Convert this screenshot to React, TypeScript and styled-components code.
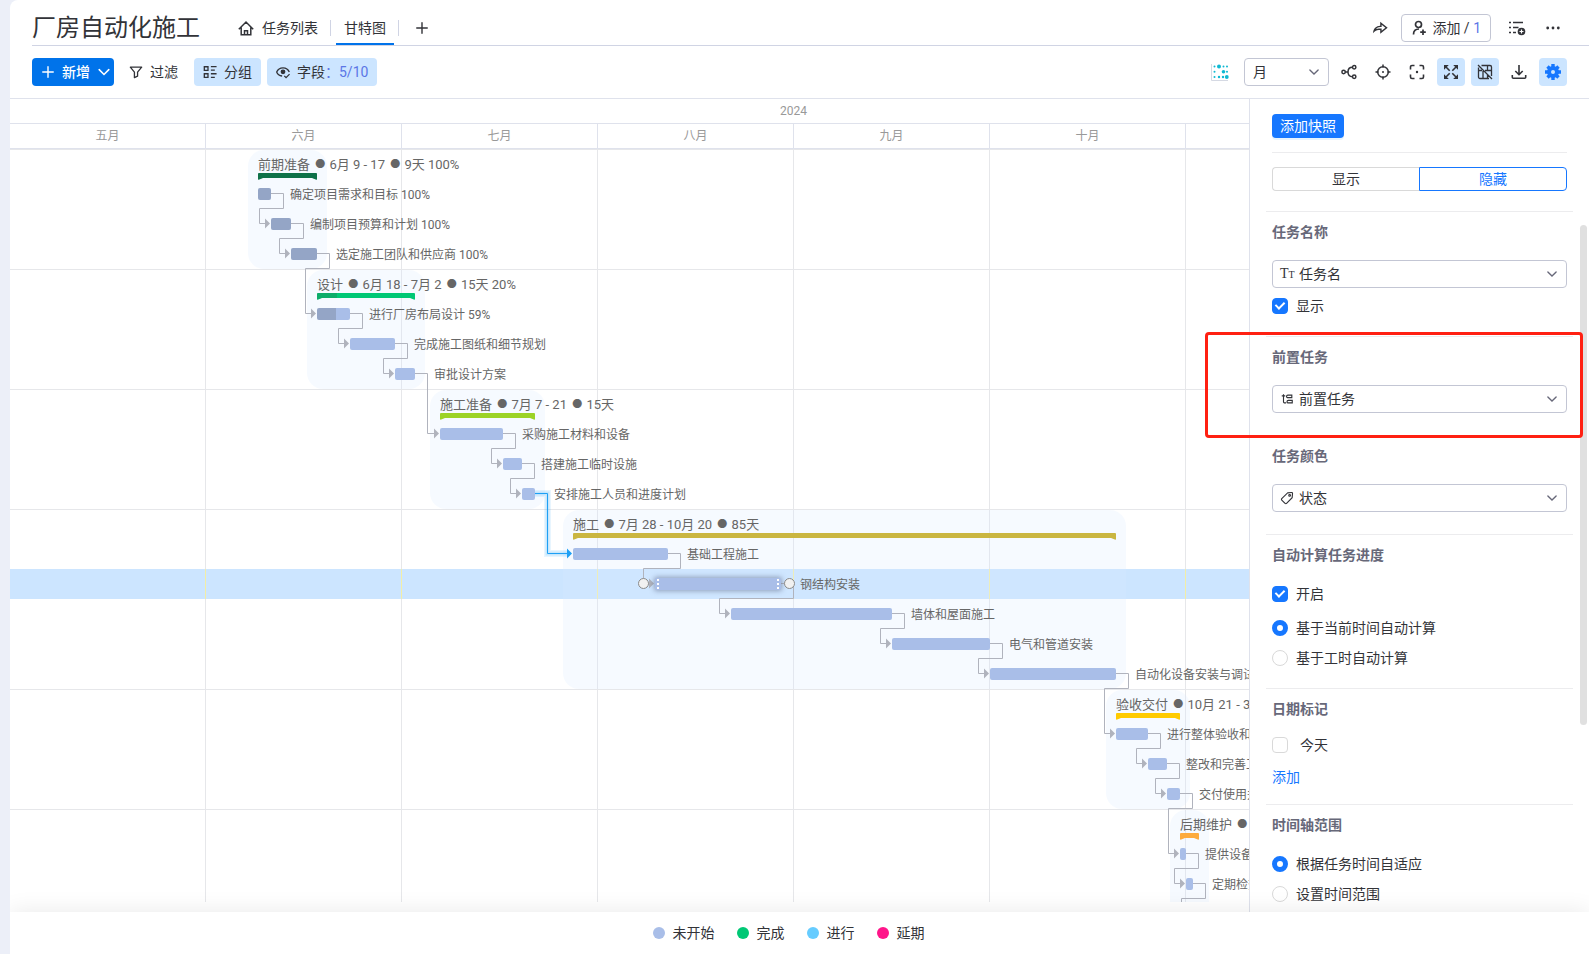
import React from "react";
import styled, { createGlobalStyle, css } from "styled-components";
import { RiShareForwardLine } from "react-icons/ri";

const GlobalStyle = createGlobalStyle`
  *, *::before, *::after { box-sizing: border-box; }
  body {
    margin: 0;
    background: #eceff8;
    color: #323338;
    font-family: Roboto, "Noto Sans CJK SC", sans-serif;
    font-size: 14px;
    line-height: 22px;
  }
  button, select, input { font: inherit; color: inherit; margin: 0; }
  svg { display: block; flex: none; }
`;

/* ---------- timeline data ---------- */

const MONTH_WIDTH = 196;
const ROW_HEIGHT = 30;
const FIRST_MONTH = 5;
const MONTH_NAMES = ["五月", "六月", "七月", "八月", "九月", "十月", "十一月", "十二月"];
const MONTH_DAYS = [31, 30, 31, 31, 30, 31, 30, 31];

type Day = [month: number, day: number];

/** Every month has the same width, so a day is narrower in a longer month. */
const dayToX = ([month, day]: Day) => {
  const index = month - FIRST_MONTH;
  return Math.round((index + (day - 1) / MONTH_DAYS[index]) * MONTH_WIDTH);
};

interface Task {
  name: string;
  from: Day;
  until: Day;
  progress?: number;
  selected?: boolean;
  activeLink?: boolean;
}

interface Group {
  title: string;
  color: string;
  progress?: number;
  tasks: Task[];
}

const GROUPS: Group[] = [
  {
    title: "前期准备 ● 6月 9 - 17 ● 9天 100%",
    color: "#037f4c",
    progress: 100,
    tasks: [
      { name: "确定项目需求和目标 100%", from: [6, 9], until: [6, 11], progress: 100 },
      { name: "编制项目预算和计划 100%", from: [6, 11], until: [6, 14], progress: 100 },
      { name: "选定施工团队和供应商 100%", from: [6, 14], until: [6, 18], progress: 100 },
    ],
  },
  {
    title: "设计 ● 6月 18 - 7月 2 ● 15天 20%",
    color: "#00c875",
    progress: 20,
    tasks: [
      { name: "进行厂房布局设计 59%", from: [6, 18], until: [6, 23], progress: 59 },
      { name: "完成施工图纸和细节规划", from: [6, 23], until: [6, 30] },
      { name: "审批设计方案", from: [6, 30], until: [7, 3] },
    ],
  },
  {
    title: "施工准备 ● 7月 7 - 21 ● 15天",
    color: "#9cd326",
    tasks: [
      { name: "采购施工材料和设备", from: [7, 7], until: [7, 17] },
      { name: "搭建施工临时设施", from: [7, 17], until: [7, 20] },
      { name: "安排施工人员和进度计划", from: [7, 20], until: [7, 22], activeLink: true },
    ],
  },
  {
    title: "施工 ● 7月 28 - 10月 20 ● 85天",
    color: "#cab641",
    tasks: [
      { name: "基础工程施工", from: [7, 28], until: [8, 12] },
      { name: "钢结构安装", from: [8, 10], until: [8, 30], selected: true },
      { name: "墙体和屋面施工", from: [8, 22], until: [9, 16] },
      { name: "电气和管道安装", from: [9, 16], until: [10, 1] },
      { name: "自动化设备安装与调试", from: [10, 1], until: [10, 21] },
    ],
  },
  {
    title: "验收交付 ● 10月 21 - 30 ● 10天",
    color: "#ffcb00",
    tasks: [
      { name: "进行整体验收和测试", from: [10, 21], until: [10, 26] },
      { name: "整改和完善工程", from: [10, 26], until: [10, 29] },
      { name: "交付使用并培训", from: [10, 29], until: [10, 31] },
    ],
  },
  {
    title: "后期维护 ● 10月 31 - 11月 2 ● 3天",
    color: "#fdab3d",
    tasks: [
      { name: "提供设备维护", from: [10, 31], until: [11, 1] },
      { name: "定期检查", from: [11, 1], until: [11, 2] },
      { name: "总结评估", from: [11, 2], until: [11, 3] },
    ],
  },
];

interface PlacedTask extends Task { row: number; x1: number; x2: number }
interface PlacedGroup extends Group { row: number; x1: number; x2: number; placed: PlacedTask[] }

const placeGroups = (): PlacedGroup[] => {
  let row = 0;
  return GROUPS.map((group) => {
    const first = row;
    const placed = group.tasks.map((task, i) => ({
      ...task,
      row: first + 1 + i,
      x1: dayToX(task.from),
      x2: dayToX(task.until),
    }));
    row += group.tasks.length + 1;
    return { ...group, row: first, x1: placed[0].x1, x2: placed[placed.length - 1].x2, placed };
  });
};

const PLACED = placeGroups();
const ALL_TASKS = PLACED.flatMap((g) => g.placed);

/* ---------- shell ---------- */

const Shell = styled.div`
  display: flex;
  flex-direction: column;
  height: 100vh;
  margin-left: 10px;
  background: #fff;
  border-top-left-radius: 8px;
  overflow: hidden;
`;

const Header = styled.header`
  display: flex;
  align-items: center;
  flex: none;
  height: 46px;
  margin-left: 22px;
  padding-right: 22px;
  border-bottom: 1px solid #d0d4e4;
`;

const Title = styled.h1`
  margin: 0 30px 0 0;
  padding-top: 10px;
  font-size: 24px;
  line-height: 32px;
  font-weight: 400;
  white-space: nowrap;
`;

const Tabs = styled.nav`
  display: flex;
  align-items: center;
  height: 45px;
  padding-top: 11px;
`;

const Tab = styled.a<{ $active?: boolean }>`
  display: flex;
  align-items: center;
  gap: 8px;
  height: 34px;
  padding: 2px 8px 0;
  border-bottom: 2px solid ${(p) => (p.$active ? "#0073ea" : "transparent")};
  color: inherit;
  text-decoration: none;
  white-space: nowrap;
`;

const TabRule = styled.span`
  width: 1px;
  height: 16px;
  margin: 0 5px 0 4px;
  background: #d0d4e4;
`;

const Spacer = styled.div`
  flex: 1;
`;

const IconButton = styled.button<{ $on?: boolean }>`
  display: flex;
  align-items: center;
  justify-content: center;
  flex: none;
  width: 28px;
  height: 28px;
  padding: 0;
  border: 0;
  border-radius: 4px;
  background: ${(p) => (p.$on ? "#cce5ff" : "transparent")};
  cursor: pointer;
`;

const AddTab = styled(IconButton)`
  margin-left: 4px;
`;

const HeaderActions = styled.div`
  display: flex;
  align-items: center;
  gap: 8px;
  padding-top: 11px;
`;

const InviteButton = styled.button`
  display: flex;
  align-items: center;
  gap: 5px;
  height: 28px;
  margin-right: 4px;
  padding: 0 9px;
  border: 1px solid #c3c6d4;
  border-radius: 4px;
  background: #fff;
  white-space: nowrap;
  cursor: pointer;
`;

const Count = styled.span`
  color: #5b76e6;
`;

const Toolbar = styled.div`
  display: flex;
  align-items: center;
  flex: none;
  gap: 6px;
  height: 53px;
  padding: 0 22px;
  border-bottom: 1px solid #dfe2ec;
`;

const ToolButton = styled.button<{ $kind?: "primary" | "on" }>`
  display: flex;
  align-items: center;
  gap: 7px;
  height: 28px;
  padding: 0 9px;
  border: 0;
  border-radius: 4px;
  background: transparent;
  white-space: nowrap;
  cursor: pointer;
  ${(p) => p.$kind === "on" && css`background: #cce5ff;`}
  ${(p) => p.$kind === "primary" && css`
    padding: 0 3px 0 9px;
    background: #0073ea;
    color: #fff;
    font-weight: 500;
  `}
`;

const FilterButton = styled(ToolButton)`
  margin-right: 1px;
`;

const BoardButton = styled(IconButton)`
  margin-right: 4px;
`;

const SelectFrame = styled.div<{ $width?: number }>`
  position: relative;
  width: ${(p) => (p.$width ? `${p.$width}px` : "100%")};
  height: 28px;
`;

const Select = styled.select<{ $icon?: boolean }>`
  width: 100%;
  height: 28px;
  padding: 0 28px 0 ${(p) => (p.$icon ? 26 : 8)}px;
  border: 1px solid #c3c6d4;
  border-radius: 4px;
  background: #fff;
  appearance: none;
  cursor: pointer;
`;

const SelectIcon = styled.span`
  position: absolute;
  left: 8px;
  top: 0;
  display: flex;
  align-items: center;
  height: 28px;
  pointer-events: none;
`;

const SelectArrow = styled.span`
  position: absolute;
  right: 9px;
  top: 0;
  display: flex;
  align-items: center;
  height: 28px;
  color: #676879;
  pointer-events: none;
`;

const TextMark = styled.span`
  font: 14px/28px "Liberation Serif", serif;
  color: #323338;
`;

const TextMarkSmall = styled.span`
  font-size: 10px;
`;

const Main = styled.main`
  display: flex;
  flex: 1;
  min-height: 0;
`;

/* ---------- gantt ---------- */

const Chart = styled.section`
  display: flex;
  flex-direction: column;
  flex: 1;
  min-width: 0;
  padding-bottom: 10px;
  overflow: hidden;
`;

const ScaleRow = styled.div`
  display: flex;
  flex: none;
  height: 25px;
  width: ${MONTH_WIDTH * MONTH_NAMES.length}px;
  border-bottom: 1px solid #dfe2ec;
`;

const ScaleCell = styled.div<{ $span?: number }>`
  flex: none;
  width: ${(p) => (p.$span ?? 1) * MONTH_WIDTH}px;
  border-right: 1px solid #dfe2ec;
  color: #999;
  font-size: 12px;
  line-height: 24px;
  text-align: center;
`;

const Canvas = styled.div`
  position: relative;
  flex: 1;
  min-height: 0;
  overflow: hidden;
`;

const GroupBlock = styled.div`
  border-top: 1px solid #e6e7ea;
`;

const SelectedRow = styled.div`
  position: absolute;
  left: 0;
  right: 0;
  height: ${ROW_HEIGHT}px;
  background: #cce5ff;
`;

const Band = styled.div`
  position: absolute;
  border-radius: 16px;
  background: rgba(217, 235, 255, 0.235);
`;

const GridLines = styled.div<{ $color: string }>`
  position: absolute;
  inset: 0;
  background: repeating-linear-gradient(
    to right,
    transparent 0 ${MONTH_WIDTH - 1}px,
    ${(p) => p.$color} ${MONTH_WIDTH - 1}px ${MONTH_WIDTH}px
  );
`;

const Links = styled.svg`
  position: absolute;
  left: 0;
  top: 0;
`;

const SummaryTitle = styled.div`
  position: absolute;
  color: #666;
  font-size: 13px;
  line-height: 32px;
  white-space: nowrap;
`;

const SummaryDot = styled.span`
  display: inline-block;
  width: 9px;
  margin: 0 2px;
  font-size: 10px;
  line-height: 1;
  vertical-align: 1px;
`;

const SummaryBar = styled.div<{ $color: string }>`
  position: absolute;
  height: 7px;
  background: ${(p) => p.$color};
  border-radius: 1px;
  clip-path: polygon(0 0, 100% 0, 100% 100%, calc(100% - 5px) 5px, 5px 5px, 0 100%);
`;

const Bar = styled.div<{ $selected?: boolean }>`
  position: absolute;
  height: 12px;
  border-radius: 2px;
  background: #a9bee8;
  overflow: hidden;
  ${(p) => p.$selected && css`
    box-shadow: 0 0 5px 1px rgba(80, 90, 120, 0.5);
    &::before, &::after {
      content: "";
      position: absolute;
      top: 1px;
      bottom: 1px;
      width: 2px;
      background: repeating-linear-gradient(to bottom, #fff 0 2px, transparent 2px 4px);
    }
    &::before { left: 2px; }
    &::after { right: 2px; }
  `}
`;

const Progress = styled.div`
  height: 100%;
  background: rgba(64, 64, 64, 0.2);
`;

const BarLabel = styled.div`
  position: absolute;
  color: #666;
  font-size: 12px;
  line-height: 32px;
  white-space: nowrap;
`;

const Knob = styled.span`
  position: absolute;
  width: 11px;
  height: 11px;
  border: 1px solid #8a8a8a;
  border-radius: 50%;
  background: #f1f1f1;
`;

const linkPath = (a: PlacedTask, b: PlacedTask) => {
  const y1 = a.row * ROW_HEIGHT + 14.5;
  const y2 = b.row * ROW_HEIGHT + 14.5;
  const out = a.x2 + 12.5;
  const into = b.x1 - 11.5;
  if (into >= out) return `M${a.x2} ${y1}H${out}V${y2}H${b.x1 - 5}`;
  const bend = (a.row + 1) * ROW_HEIGHT - 0.5;
  return `M${a.x2} ${y1}H${out}V${bend}H${into}V${y2}H${b.x1 - 5}`;
};

const TaskLink = ({ a, b }: { a: PlacedTask; b: PlacedTask }) => {
  const y = b.row * ROW_HEIGHT + 14.5;
  const color = a.activeLink ? "#1ea0f5" : "#b0b3bd";
  const d = linkPath(a, b);
  return (
    <g fill="none">
      {a.activeLink && <path d={d} stroke="#1ea0f5" strokeOpacity="0.1" strokeWidth="7" />}
      {a.activeLink && <path d={d} stroke="#1ea0f5" strokeOpacity="0.16" strokeWidth="4" />}
      <path d={d} stroke={color} />
      <path d={`M${b.x1 - 6} ${y - 5}L${b.x1 - 1} ${y}L${b.x1 - 6} ${y + 5}Z`} fill={color} />
    </g>
  );
};

const SummaryText = ({ text }: { text: string }) => (
  <>
    {text.split("●").map((part, i) => (
      <React.Fragment key={part}>
        {i > 0 && <SummaryDot>●</SummaryDot>}
        {part}
      </React.Fragment>
    ))}
  </>
);

const Gantt = () => {
  const selected = ALL_TASKS.find((t) => t.selected);
  return (
    <Chart aria-label="甘特图">
      <ScaleRow><ScaleCell $span={MONTH_NAMES.length}>2024</ScaleCell></ScaleRow>
      <ScaleRow>{MONTH_NAMES.map((m) => <ScaleCell key={m}>{m}</ScaleCell>)}</ScaleRow>
      <Canvas>
        {PLACED.map((g) => (
          <GroupBlock key={g.title} style={{ height: (g.placed.length + 1) * ROW_HEIGHT }} />
        ))}
        <GridLines $color="#e6e7ea" />
        {selected && (
          <SelectedRow style={{ top: selected.row * ROW_HEIGHT }}>
            <GridLines $color="#f3eea6" />
          </SelectedRow>
        )}
        {PLACED.map((g) => (
          <Band
            key={g.title}
            style={{
              left: g.x1 - 10,
              width: g.x2 - g.x1 + 20,
              top: g.row * ROW_HEIGHT + 1,
              height: (g.placed.length + 1) * ROW_HEIGHT - 1,
            }}
          />
        ))}
        <Links width={MONTH_WIDTH * MONTH_NAMES.length} height={ROW_HEIGHT * 27}>
          {ALL_TASKS.slice(1).map((b, i) => <TaskLink key={b.name} a={ALL_TASKS[i]} b={b} />)}
        </Links>
        {PLACED.map((g) => (
          <React.Fragment key={g.title}>
            <SummaryTitle style={{ left: g.x1, top: g.row * ROW_HEIGHT }}>
              <SummaryText text={g.title} />
            </SummaryTitle>
            <SummaryBar
              $color={g.color}
              style={{ left: g.x1, top: g.row * ROW_HEIGHT + 24, width: g.x2 - g.x1 }}
            >
              {g.progress && <Progress style={{ width: `${g.progress}%` }} />}
            </SummaryBar>
            {g.placed.map((t) => (
              <React.Fragment key={t.name}>
                <Bar
                  $selected={t.selected}
                  style={{ left: t.x1, top: t.row * ROW_HEIGHT + 9, width: t.x2 - t.x1 }}
                >
                  {t.progress && <Progress style={{ width: `${t.progress}%` }} />}
                </Bar>
                <BarLabel style={{ left: t.x2 + 19, top: t.row * ROW_HEIGHT }}>{t.name}</BarLabel>
              </React.Fragment>
            ))}
          </React.Fragment>
        ))}
        {selected && (
          <>
            <Knob style={{ left: selected.x1 - 17, top: selected.row * ROW_HEIGHT + 9 }} />
            <Knob style={{ left: selected.x2 + 3, top: selected.row * ROW_HEIGHT + 9 }} />
          </>
        )}
      </Canvas>
    </Chart>
  );
};

/* ---------- settings panel ---------- */

const Panel = styled.aside`
  position: relative;
  flex: none;
  width: 340px;
  padding: 15px 16px 0;
  border-left: 1px solid #dfe2ec;
  overflow-x: visible;
  overflow-y: clip;
`;

const PanelTop = styled.div`
  padding: 0 6px 20px;
`;

const SnapshotButton = styled.button`
  display: block;
  height: 24px;
  padding: 0 8px;
  border: 0;
  border-radius: 4px;
  background: #1677ff;
  box-shadow: 0 2px 0 rgba(5, 145, 255, 0.1);
  color: #fff;
  line-height: 22px;
  cursor: pointer;
`;

const Rule = styled.hr`
  height: 1px;
  margin: 14px 0;
  border: 0;
  background: #ececee;
`;

const Segments = styled.div`
  display: flex;
`;

const Segment = styled.button<{ $active?: boolean }>`
  flex: 1;
  height: 24px;
  padding: 0;
  border: 1px solid #d9d9d9;
  border-radius: 4px 0 0 4px;
  border-right-width: 0;
  background: #fff;
  line-height: 20px;
  cursor: pointer;
  ${(p) => p.$active && css`
    border: 1px solid #1677ff;
    border-radius: 0 4px 4px 0;
    color: #1677ff;
  `}
`;

const Section = styled.section`
  position: relative;
  padding: 9px 6px 22px;
  border-top: 1px solid #ececee;
`;

const SectionTitle = styled.h2`
  margin: 0 0 17px;
  color: #676879;
  font-size: 14px;
  line-height: 22px;
  font-weight: 700;
`;

const Options = styled.div<{ $top?: number; $gap?: number }>`
  display: flex;
  flex-direction: column;
  align-items: flex-start;
  gap: ${(p) => p.$gap ?? 14}px;
  padding-top: ${(p) => p.$top ?? 3}px;
`;

const Option = styled.label<{ $gap?: number }>`
  display: flex;
  align-items: center;
  gap: ${(p) => p.$gap ?? 8}px;
  height: 16px;
  line-height: 16px;
  cursor: pointer;
`;

const Check = styled.input.attrs({ type: "checkbox" })`
  position: relative;
  width: 16px;
  height: 16px;
  border: 1px solid #d9d9d9;
  border-radius: 4px;
  background: #fff;
  appearance: none;
  &:checked { border-color: #1677ff; background: #1677ff; }
  &:checked::after {
    content: "";
    position: absolute;
    left: 4px;
    top: 1px;
    width: 6px;
    height: 9px;
    border: solid #fff;
    border-width: 0 2px 2px 0;
    transform: rotate(45deg);
  }
`;

const Radio = styled.input.attrs({ type: "radio" })`
  width: 16px;
  height: 16px;
  border: 1px solid #d9d9d9;
  border-radius: 50%;
  background: #fff;
  appearance: none;
  &:checked { border: 5px solid #1677ff; }
`;

const AddLink = styled.a`
  display: block;
  width: max-content;
  margin: 13px 0 -6px;
  color: #1677ff;
  text-decoration: none;
`;

const Callout = styled.div`
  position: absolute;
  z-index: 3;
  inset: -5px -10px -3px -61px;
  border: 3px solid #ff2012;
  border-radius: 4px;
  pointer-events: none;
`;

const ScrollThumb = styled.div`
  position: absolute;
  right: 2px;
  top: 126px;
  width: 7px;
  height: 500px;
  border-radius: 4px;
  background: #e0e0e0;
`;

const Footer = styled.footer`
  position: relative;
  z-index: 2;
  display: flex;
  align-items: center;
  justify-content: center;
  flex: none;
  height: 42px;
  background: #fff;
  box-shadow: 0 0 24px rgba(0, 0, 0, 0.09);
`;

const LegendItem = styled.span<{ $color: string }>`
  display: flex;
  align-items: center;
  gap: 8px;
  margin-right: 22px;
  &::before {
    content: "";
    width: 12px;
    height: 12px;
    border-radius: 50%;
    background: ${(p) => p.$color};
  }
`;

/* ---------- icons ---------- */

const Icon = ({ size = 16, w = 1.4, children }: { size?: number; w?: number; children: React.ReactNode }) => (
  <svg width={size} height={size} viewBox="0 0 16 16" fill="none" stroke="currentColor" strokeWidth={w} aria-hidden>
    {children}
  </svg>
);

const ChevronIcon = ({ size = 12 }: { size?: number }) => (
  <Icon size={size} w={1.8}><path d="M2.500 5.300L8 10.800l5.500-5.500" strokeLinecap="round" /></Icon>
);
const PlusIcon = ({ size = 14 }: { size?: number }) => (
  <Icon size={size} w={1.6}><path d="M8 2v12M2 8h12" strokeLinecap="round" /></Icon>
);
const HomeIcon = () => (
  <Icon w={1.5}><path d="M.8 9.200L8 2l7.200 7.200M3.200 7.500v7.300h9.600V7.500M6.500 15v-4.200h3V15" /></Icon>
);
const FilterIcon = () => (
  <Icon size={14} w={1.5}><path d="M1.500 2.500h13L9.800 8.200v4.600l-3.600 1.700V8.200z" strokeLinejoin="round" /></Icon>
);
const GroupIcon = () => (
  <Icon size={14} w={1.5}><path d="M1.500 2h4.200v4.200H1.500zM1.500 10h4.200v4.200H1.500zM9 1.800h6.500M9 5.800h4.500M9 10h6.500M9 14.200h4.500" /></Icon>
);
const EyeIcon = () => (
  <Icon size={14} w={1.5}>
    <path d="M7 12.600C3.500 12.200 1.500 10 .8 8 2 5 4.600 3.200 8 3.200S14 5 15.200 8M9.500 12.400l2 2 4-4" />
    <circle cx="8" cy="7.800" r="2" fill="currentColor" />
  </Icon>
);
const InviteIcon = () => (
  <Icon w={1.7}>
    <circle cx="7.500" cy="4.500" r="3" />
    <path d="M2.500 14.500c0-3.500 1.800-5.500 5.500-5.500M12 9.500v5.500M9.200 12.200h5.600" />
  </Icon>
);
const ListAddIcon = () => (
  <svg width="18" height="18" viewBox="0 0 18 18" aria-hidden>
    <path d="M1 3.500h2M5 3.500h10M1 8.500h2M5 8.500h5.500M1 13.500h2M5 13.500h3" stroke="#323338" strokeWidth="1.500" />
    <circle cx="13.500" cy="12.500" r="3.800" fill="#323338" />
    <path d="M13.500 10.500v4M11.500 12.500h4" stroke="#fff" strokeWidth="1.200" />
  </svg>
);
const DotsIcon = () => (
  <Icon><g fill="currentColor" stroke="none"><circle cx="2.700" cy="8" r="1.400" /><circle cx="8" cy="8" r="1.400" /><circle cx="13.300" cy="8" r="1.400" /></g></Icon>
);
const BOARD_DOTS = [
  [3.5, 3.5, 1], [8, 3.5, 2], [12.5, 3.5, 1], [16, 3.5, 1],
  [3.5, 8.700, 1], [12.500, 8.700, 1.800], [16, 8.700, 1],
  [3.5, 14, 1], [8, 14, 1.200], [12, 14, 1.200], [15.800, 14, 1.900],
];
const BoardIcon = () => (
  <svg width="18" height="18" viewBox="0 0 18 18" aria-hidden>
    <path d="M.5 1v16.500H17" fill="none" stroke="#d5d9e3" />
    {BOARD_DOTS.map(([cx, cy, r]) => <circle key={`${cx}-${cy}`} cx={cx} cy={cy} r={r} fill="#0fb9d2" />)}
  </svg>
);
const BranchIcon = () => (
  <Icon w={1.5}>
    <circle cx="2.600" cy="8" r="1.700" /><circle cx="13.200" cy="3.300" r="1.700" /><circle cx="13.200" cy="12.700" r="1.700" />
    <path d="M4.300 8H7M11.500 3.300C8 3.300 7 5 7 8s1 4.700 4.500 4.700" />
  </Icon>
);
const TargetIcon = () => (
  <Icon w={1.5}>
    <circle cx="8" cy="8" r="5.300" /><path d="M8 .5v3M8 12.500v3M.5 8h3M12.500 8h3" /><circle cx="8" cy="8" r="1" fill="currentColor" stroke="none" />
  </Icon>
);
const FocusIcon = () => (
  <Icon w={1.6}>
    <path d="M1.500 5.500V3A1.500 1.500 0 013 1.500h2.500M10.500 1.500H13A1.500 1.500 0 0114.500 3v2.500M14.500 10.500V13a1.500 1.500 0 01-1.500 1.500h-2.500M5.500 14.500H3A1.500 1.500 0 011.500 13v-2.500" />
    <circle cx="8" cy="8" r="1.200" fill="currentColor" stroke="none" />
  </Icon>
);
const ExpandIcon = () => (
  <Icon w={1.6}>
    <path d="M3 3l3.700 3.700M13 3L9.300 6.700M13 13L9.300 9.300M3 13l3.700-3.700" />
    <path d="M1 1h4.800L1 5.800zM15 1v4.800L10.200 1zM15 15h-4.800L15 10.200zM1 15v-4.800L5.800 15z" fill="currentColor" stroke="none" />
  </Icon>
);
const TableOffIcon = () => (
  <Icon w={1.3}>
    <path d="M4.500 1.500H13A1.500 1.500 0 0114.500 3v9M12 14.500H3A1.500 1.500 0 011.500 13V3.500M6 7v7.500M10.500 1.500V7M10.500 11v3.500M8 6.500h6.500M1.500 6.500H5M1 1l14 14" />
  </Icon>
);
const DownloadIcon = () => (
  <Icon w={1.6}><path d="M8 1v9.500M4.300 7L8 10.700 11.700 7M1.300 11v2.200a1 1 0 001 1h11.400a1 1 0 001-1V11" /></Icon>
);
const GearIcon = () => (
  <svg width="16" height="16" viewBox="0 0 16 16" aria-hidden>
    <g stroke="#1677ff" strokeWidth="3.400">
      <path d="M8 0v16M0 8h16M2.500 2.500l11 11M13.500 2.500l-11 11" />
    </g>
    <circle cx="8" cy="8" r="6" fill="#1677ff" />
    <circle cx="8" cy="8" r="2" fill="#cce5ff" />
  </svg>
);
const TreeIcon = () => (
  <Icon size={14} w={1.300}>
    <path d="M2 4.500h4M4 2.500V11a1.500 1.500 0 001.500 1.500H7M9 3.500h4.500v3H9a1.500 1.500 0 010-3zM9.500 9.500h4.500v3H9.500a1.500 1.500 0 010-3z" />
  </Icon>
);
const TagIcon = () => (
  <Icon size={14} w={1.3}>
    <path d="M8.600 2.200l4.600-.5a1 1 0 011.100 1.100l-.4 4.800-6.400 6.600a1.200 1.200 0 01-1.700 0L2 10.400a1.200 1.200 0 010-1.700z" />
    <circle cx="11" cy="5" r="1" />
  </Icon>
);

const FieldSelect = ({ label, value, icon }: { label: string; value: string; icon: React.ReactNode }) => (
  <SelectFrame>
    <Select $icon aria-label={label}><option>{value}</option></Select>
    <SelectIcon>{icon}</SelectIcon>
    <SelectArrow><ChevronIcon /></SelectArrow>
  </SelectFrame>
);

const Settings = () => (
  <Panel>
    <PanelTop>
      <SnapshotButton>添加快照</SnapshotButton>
      <Rule />
      <Segments>
        <Segment>显示</Segment>
        <Segment $active>隐藏</Segment>
      </Segments>
    </PanelTop>
    <Section>
      <SectionTitle>任务名称</SectionTitle>
      <FieldSelect
        label="任务名称"
        value="任务名"
        icon={<TextMark>T<TextMarkSmall>T</TextMarkSmall></TextMark>}
      />
      <Options $top={10}>
        <Option><Check defaultChecked />显示</Option>
      </Options>
    </Section>
    <Section>
      <SectionTitle>前置任务</SectionTitle>
      <FieldSelect label="前置任务" value="前置任务" icon={<TreeIcon />} />
      <Callout />
    </Section>
    <Section>
      <SectionTitle>任务颜色</SectionTitle>
      <FieldSelect label="任务颜色" value="状态" icon={<TagIcon />} />
    </Section>
    <Section>
      <SectionTitle>自动计算任务进度</SectionTitle>
      <Options $gap={18}>
        <Option><Check defaultChecked />开启</Option>
        <Options $top={0}>
          <Option><Radio name="progress" defaultChecked />基于当前时间自动计算</Option>
          <Option><Radio name="progress" />基于工时自动计算</Option>
        </Options>
      </Options>
    </Section>
    <Section>
      <SectionTitle>日期标记</SectionTitle>
      <Options $top={0}>
        <Option $gap={12}><Check />今天</Option>
      </Options>
      <AddLink href="#add">添加</AddLink>
    </Section>
    <Section>
      <SectionTitle>时间轴范围</SectionTitle>
      <Options>
        <Option><Radio name="range" defaultChecked />根据任务时间自适应</Option>
        <Option><Radio name="range" />设置时间范围</Option>
      </Options>
    </Section>
    <ScrollThumb />
  </Panel>
);

export default function App() {
  return (
    <>
      <GlobalStyle />
      <Shell>
        <Header>
          <Title>厂房自动化施工</Title>
          <Tabs>
            <Tab href="#list"><HomeIcon />任务列表</Tab>
            <TabRule />
            <Tab href="#gantt" $active>甘特图</Tab>
            <TabRule />
            <AddTab aria-label="添加视图"><PlusIcon /></AddTab>
          </Tabs>
          <Spacer />
          <HeaderActions>
            <IconButton aria-label="分享"><RiShareForwardLine size={17} /></IconButton>
            <InviteButton>
              <InviteIcon />
              <span>添加 / <Count>1</Count></span>
            </InviteButton>
            <IconButton aria-label="活动列表"><ListAddIcon /></IconButton>
            <IconButton aria-label="更多"><DotsIcon /></IconButton>
          </HeaderActions>
        </Header>
        <Toolbar>
          <ToolButton $kind="primary"><PlusIcon />新增<ChevronIcon size={14} /></ToolButton>
          <FilterButton><FilterIcon />过滤</FilterButton>
          <ToolButton $kind="on"><GroupIcon />分组</ToolButton>
          <ToolButton $kind="on"><EyeIcon /><span>字段<Count>：5/10</Count></span></ToolButton>
          <Spacer />
          <BoardButton aria-label="视图"><BoardIcon /></BoardButton>
          <SelectFrame $width={85}>
            <Select aria-label="时间刻度"><option>月</option></Select>
            <SelectArrow><ChevronIcon /></SelectArrow>
          </SelectFrame>
          <IconButton aria-label="依赖"><BranchIcon /></IconButton>
          <IconButton aria-label="定位"><TargetIcon /></IconButton>
          <IconButton aria-label="聚焦"><FocusIcon /></IconButton>
          <IconButton $on aria-label="全屏"><ExpandIcon /></IconButton>
          <IconButton $on aria-label="隐藏表格"><TableOffIcon /></IconButton>
          <IconButton aria-label="下载"><DownloadIcon /></IconButton>
          <IconButton $on aria-label="设置"><GearIcon /></IconButton>
        </Toolbar>
        <Main>
          <Gantt />
          <Settings />
        </Main>
        <Footer>
          <LegendItem $color="#a9bee8">未开始</LegendItem>
          <LegendItem $color="#00c875">完成</LegendItem>
          <LegendItem $color="#66ccff">进行</LegendItem>
          <LegendItem $color="#ff158a">延期</LegendItem>
        </Footer>
      </Shell>
    </>
  );
}
